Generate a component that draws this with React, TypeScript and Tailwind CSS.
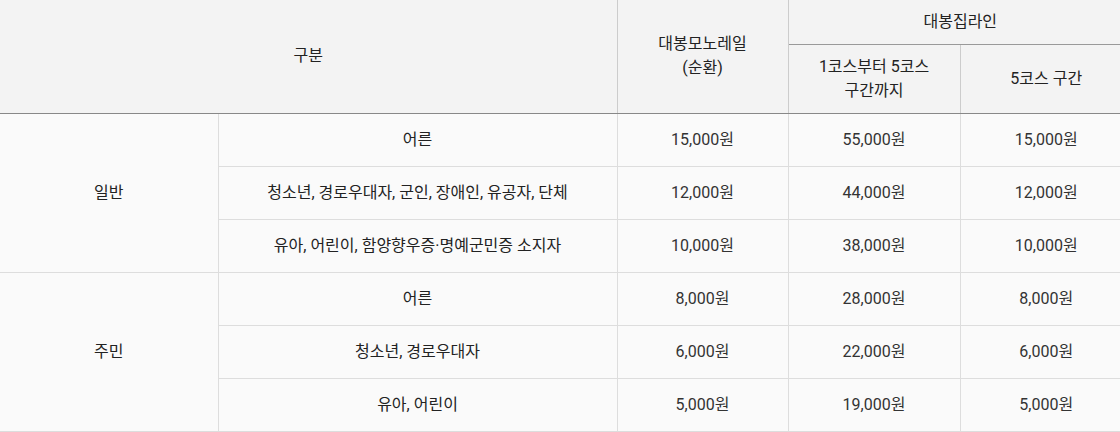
import React from "react";

const font = { fontFamily: 'Roboto, "Noto Sans CJK KR", "Noto Sans", sans-serif' };

const groups = [
  {
    name: "일반",
    rows: [
      ["어른", "15,000원", "55,000원", "15,000원"],
      ["청소년, 경로우대자, 군인, 장애인, 유공자, 단체", "12,000원", "44,000원", "12,000원"],
      ["유아, 어린이, 함양향우증·명예군민증 소지자", "10,000원", "38,000원", "10,000원"],
    ],
  },
  {
    name: "주민",
    rows: [
      ["어른", "8,000원", "28,000원", "8,000원"],
      ["청소년, 경로우대자", "6,000원", "22,000원", "6,000원"],
      ["유아, 어린이", "5,000원", "19,000원", "5,000원"],
    ],
  },
];

export default function App() {
  return (
    <div className="w-[1120px] overflow-hidden bg-white" style={font}>
      <table className="w-[1132px] max-w-none table-fixed border-collapse text-[16px] text-[#222]">
        <colgroup>
          <col className="w-[218px]" />
          <col className="w-[399px]" />
          <col className="w-[171px]" />
          <col className="w-[172px]" />
          <col className="w-[172px]" />
        </colgroup>
        <thead>
          <tr className="h-[44px]">
            <th
              colSpan={2}
              rowSpan={2}
              className="bg-[#f3f3f3] font-normal border-r border-r-[#cccccc] border-b border-b-[#888888]"
            >
              구분
            </th>
            <th
              rowSpan={2}
              className="bg-[#f3f3f3] font-normal leading-[24px] border-r border-r-[#cccccc] border-b border-b-[#888888]"
            >
              대봉모노레일
              <br />
              (순환)
            </th>
            <th colSpan={2} className="bg-[#f3f3f3] font-normal border-b border-b-[#999999]">
              대봉집라인
            </th>
          </tr>
          <tr className="h-[69px]">
            <th className="bg-[#f3f3f3] font-normal leading-[24px] border-r border-r-[#cccccc] border-b border-b-[#888888]">
              1코스부터 5코스
              <br />
              구간까지
            </th>
            <th className="bg-[#f3f3f3] font-normal border-b border-b-[#888888]">5코스 구간</th>
          </tr>
        </thead>
        <tbody>
          {groups.map((g) =>
            g.rows.map((r, i) => (
              <tr key={g.name + i} className="h-[53px]">
                {i === 0 && (
                  <td
                    rowSpan={3}
                    className="bg-[#fafafa] text-center border-r border-r-[#dddddd] border-b border-b-[#dddddd]"
                  >
                    {g.name}
                  </td>
                )}
                <td className="bg-[#fafafa] text-center border-r border-r-[#dddddd] border-b border-b-[#dddddd]">
                  {r[0]}
                </td>
                <td className="bg-[#fafafa] text-center text-[#333] border-r border-r-[#dddddd] border-b border-b-[#dddddd]">
                  {r[1]}
                </td>
                <td className="bg-[#fafafa] text-center text-[#333] border-r border-r-[#dddddd] border-b border-b-[#dddddd]">
                  {r[2]}
                </td>
                <td className="bg-[#fafafa] text-center text-[#333] border-b border-b-[#dddddd]">
                  {r[3]}
                </td>
              </tr>
            ))
          )}
        </tbody>
      </table>
    </div>
  );
}
